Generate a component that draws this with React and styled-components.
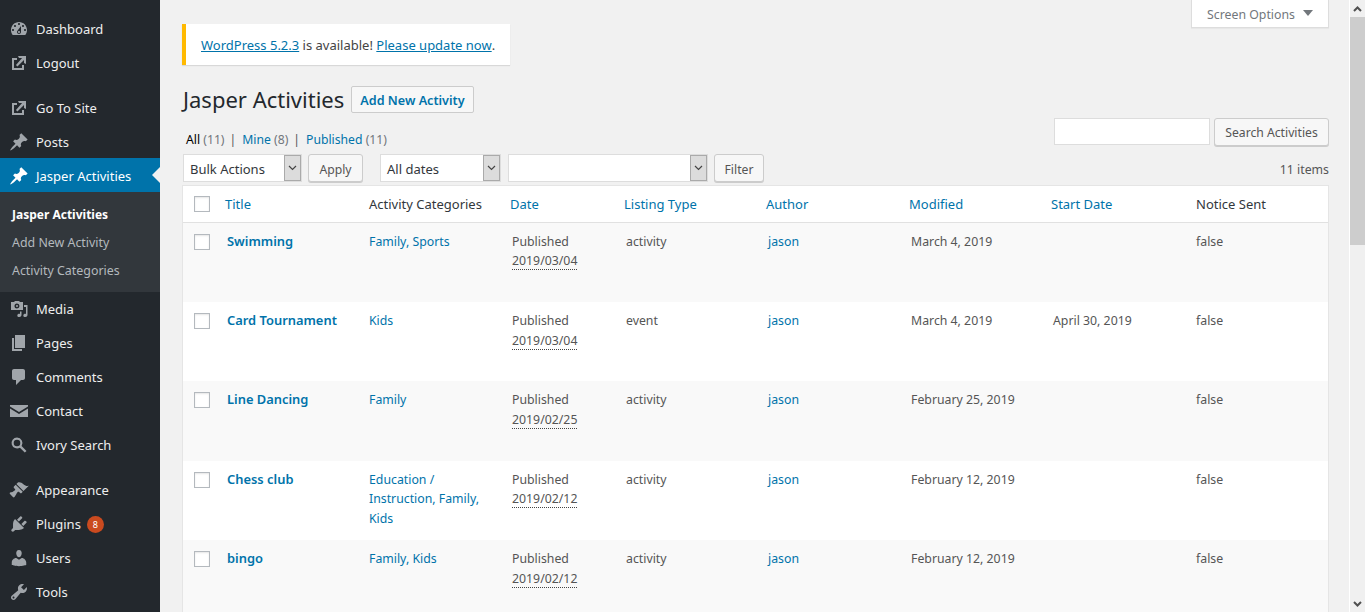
import React from "react";
import styled, { createGlobalStyle } from "styled-components";

const Global = createGlobalStyle`
  html, body { margin: 0; padding: 0; height: 612px; overflow: hidden; background: #f1f1f1; }
  * { box-sizing: border-box; }
  body { font-family: "Noto Sans", "Open Sans", sans-serif; font-size: 13px; color: #444; }
`;

const Page = styled.div`display:flex;height:612px;overflow:hidden;`;
const Side = styled.nav`width:160px;flex:none;background:#23282d;padding-top:12px;height:612px;overflow:hidden;`;
const MenuItem = styled.div`
  position:relative;display:flex;align-items:center;height:34px;padding-left:9px;
  padding-top:${p=>p.$nudge?"2px":"0"};
  color:${p=>p.$active?"#fff":"#eee"};background:${p=>p.$active?"#0073aa":"transparent"};
  font-size:13px;
  margin-top:${p=>p.$sep||0}px;
  svg{width:20px;height:20px;fill:${p=>p.$active?"#fff":"#a0a5aa"};flex:none;margin-right:7px;}
`;
const Arrow = styled.span`position:absolute;right:0;top:9px;border:8px solid transparent;border-right-color:#f1f1f1;border-left:0;`;
const Sub = styled.div`background:#32373c;padding:9px 0 7px;`;
const SubItem = styled.div`height:28px;line-height:28px;padding-left:12px;font-size:${p=>p.$cur?"12px":"12.4px"};color:${p=>p.$cur?"#fff":"#b4b9be"};font-weight:${p=>p.$cur?700:400};`;
const Badge = styled.span`width:17px;height:17px;border-radius:50%;background:#ca4a1f;color:#fff;font-size:9px;display:flex;align-items:center;justify-content:center;margin-left:6px;`;

const Main = styled.main`flex:1;min-width:0;padding:0 20px 0 22px;position:relative;`;
const ScreenTab = styled.div`
  position:absolute;top:0;right:20px;width:138px;height:28px;padding-top:1px;background:#fff;border:1px solid #ddd;border-top:0;
  color:#72777c;font-size:12.3px;display:flex;align-items:center;justify-content:center;gap:8px;box-shadow:0 1px 1px rgba(0,0,0,.04);
`;
const Caret = styled.span`border:5px solid transparent;border-top:6px solid #72777c;border-bottom:0;margin-top:-3px;`;
const Notice = styled.div`
  margin-top:24px;width:328px;height:41px;background:#fff;border-left:4px solid #ffb900;box-shadow:0 1px 1px rgba(0,0,0,.1);
  display:flex;align-items:center;padding-left:15px;font-size:13px;color:#444;white-space:pre;
  a{color:#0073aa;text-decoration:underline;}
`;
const HeadRow = styled.div`display:flex;align-items:center;margin-top:20px;height:29px;`;
const H1 = styled.h1`margin:0;padding:0 0 2px 1px;font-size:22px;font-weight:400;color:#23282d;`;
const AddBtn = styled.a`
  margin-left:7px;height:27px;padding:2px 8px 0;display:flex;align-items:center;border:1px solid #ccc;border-radius:2px;
  background:#f7f7f7;color:#0073aa;font-size:12.6px;font-weight:600;
`;
const TopArea = styled.div`display:flex;justify-content:space-between;align-items:flex-start;height:31px;margin-top:4px;`;
const Views = styled.div`padding:13px 0 0 4px;font-size:12.2px;color:#555;white-space:pre;b{color:#000;font-weight:400}a{color:#0073aa}span{color:#72777c}`;
const Sep = styled.i`font-style:normal;margin:0 6px 0 5px;color:#555;`;
const SearchBox = styled.div`display:flex;gap:4px;`;
const TextInput = styled.div`width:156px;height:27px;background:#fff;border:1px solid #ddd;`;
const Btn = styled.div`
  width:${p=>p.$w}px;height:28px;padding-top:${p=>p.$pt||0}px;display:flex;align-items:center;justify-content:center;background:#f7f7f7;border:1px solid #ccc;border-radius:3px;
  box-shadow:0 1px 0 #ccc;color:#555;font-size:12.2px;margin-left:${p=>p.$ml||0}px;
`;
const Filters = styled.div`display:flex;align-items:center;height:28px;margin-top:5px;padding-left:1px;`;
const Select = styled.div`
  width:${p=>p.$w}px;height:28px;background:#fff;border:1px solid #ddd;display:flex;align-items:center;justify-content:space-between;
  padding-left:6px;margin-left:${p=>p.$ml||0}px;font-size:13px;color:#32373c;
`;
const SelectText = styled.span`padding-top:2px;`;
const Chevron = styled.span`
  width:17px;height:26px;background:#dcdcdc;border:1px solid #aaa;display:flex;align-items:center;justify-content:center;
  svg{width:9px;height:6px;}
`;
const Count = styled.div`margin-left:auto;padding-top:2px;font-size:12.3px;color:#555;`;
const Table = styled.table`
  width:1147px;margin-top:3px;border-collapse:separate;border-spacing:0;table-layout:fixed;background:#fff;border:1px solid #e5e5e5;border-bottom:0;
`;
const Th = styled.th`
  height:37px;padding:0 8px;text-align:left;font-weight:400;font-size:13px;border-bottom:1px solid #e1e1e1;
  color:${p=>p.$sort?"#0073aa":"#32373c"};
  padding-left:${p=>p.$pl??8}px;
`;
const Tr = styled.tr`background:${p=>p.$alt?"#f9f9f9":"#fff"};height:${p=>p.$h}px;`;
const Td = styled.td`padding:${p=>p.$pt??9}px 10px 0;vertical-align:top;font-size:12.3px;line-height:19.5px;color:#555;a{color:#0073aa;}`;
const TitleLink = styled.a`font-size:12.9px;font-weight:600;color:#0073aa;`;
const Abbr = styled.span`border-bottom:1px dotted #444;`;
const Check = styled.span`display:block;width:16px;height:16px;background:#fff;border:1px solid #b4b9be;box-shadow:inset 0 1px 2px rgba(0,0,0,.1);`;
const CheckTd = styled(Td)`padding:11px 0 0 11px;`;
const CheckTh = styled(Th)`padding:0 0 0 11px;`;
const Bar = styled.div`width:17px;flex:none;height:612px;background:#f0f0f0;border-left:1px solid #fff;border-right:1px solid #fff;display:flex;flex-direction:column;align-items:center;`;
const BarBtn = styled.div`height:17px;width:100%;flex:none;background:#f0f0f0;display:flex;align-items:center;justify-content:center;svg{width:9px;height:6px}`;
const Thumb = styled.div`width:100%;height:228px;flex:none;background:#cdcdcd;`;
const Track = styled.div`flex:1;width:100%;`;

const ic = {
  dash:"M3.76 16h12.48c1.1-1.37 1.76-3.11 1.76-5 0-4.42-3.58-8-8-8s-8 3.58-8 8c0 1.89.66 3.63 1.76 5zM10 4c.55 0 1 .45 1 1s-.45 1-1 1-1-.45-1-1 .45-1 1-1zM6 6c.55 0 1 .45 1 1s-.45 1-1 1-1-.45-1-1 .45-1 1-1zm8 0c.55 0 1 .45 1 1s-.45 1-1 1-1-.45-1-1 .45-1 1-1zm-5.37 5.55L12 7v6c0 1.1-.9 2-2 2s-2-.9-2-2c0-.57.24-1.08.63-1.45zM4 10c.55 0 1 .45 1 1s-.45 1-1 1-1-.45-1-1 .45-1 1-1zm12 0c.55 0 1 .45 1 1s-.45 1-1 1-1-.45-1-1 .45-1 1-1zm-5 3c0-.55-.45-1-1-1s-1 .45-1 1 .45 1 1 1 1-.45 1-1z",
  ext:"M9 3h8v8l-2-1V6.92l-6.6 6.59-1.41-1.41L13.07 5H10zm-6 2h5v2H5v8h8v-3h2v5H3z",
  pin:"M10.44 3.02l1.82-1.82 6.36 6.35-1.83 1.82c-1.05-.68-2.48-.57-3.41.36l-.75.75c-.92.93-1.04 2.35-.35 3.41l-1.83 1.82-2.41-2.41-2.8 2.79c-.42.42-3.38 2.71-3.8 2.29s1.86-3.39 2.28-3.81l2.79-2.79L4.1 9.36l1.83-1.82c1.05.69 2.48.57 3.4-.36l.75-.75c.93-.92 1.05-2.35.36-3.41z",
  media:"M2 3h3l1-1h4l1 1h3v8H2zm6 1.5a2.5 2.5 0 1 0 0 5 2.5 2.5 0 0 0 0-5zm0 1.5a1 1 0 1 1 0 2 1 1 0 0 1 0-2zM17 6h1.5v10c0 1.2-1 2-2.2 2s-2-.7-2-1.6.9-1.6 2-1.6c.3 0 .5 0 .7.1V8h-2V6zM11 12.5h1.5V16c0 1.2-1 2-2.2 2s-2-.7-2-1.6.9-1.6 2-1.6c.3 0 .5 0 .7.1z",
  pages:"M6 15V2h10v13H6zm-1 1h8v2H3V5h2v11z",
  comment:"M5 2h9c1.1 0 2 .9 2 2v7c0 1.1-.9 2-2 2h-2l-5 5v-5H5c-1.1 0-2-.9-2-2V4c0-1.1.9-2 2-2z",
  mail:"M1 4h18v1.5L10 11 1 5.5zM1 7.5l9 5.5 9-5.5V16H1z",
  search:"M8 2.5a5.5 5.5 0 0 1 4.6 8.5l4.9 4.9-1.7 1.7-4.9-4.9A5.5 5.5 0 1 1 8 2.5zm0 2.2a3.3 3.3 0 1 0 0 6.6 3.3 3.3 0 0 0 0-6.6z",
  brush:"M14.48 11.06L7.41 3.99l1.5-1.5c.5-.56 2.3-.47 3.51.32 1.21.8 1.43 1.28 2.91 2.1 1.18.64 2.45 1.26 4.45.85zm-.71.71L6.7 4.7 4.93 6.47c-.39.39-.39 1.02 0 1.41l1.06 1.06c.39.39.39 1.03 0 1.42-.6.6-1.48 1.06-2.5 1.6L1 12.5c-.5.5-.5 1 0 1.6l2.9 2.9c.6.5 1.1.5 1.6 0l1.6-2.5c.5-1 1-1.9 1.6-2.5.39-.39 1.03-.39 1.42 0l1.06 1.06c.39.39 1.02.39 1.41 0z",
  plug:"M13.11 4.36L9.87 7.6 8 5.73l3.24-3.24c.35-.34 1.05-.2 1.56.32.52.51.66 1.21.31 1.55zm-8 1.77l.91-1.12 9.01 9.01-1.19.84c-.71.71-2.63 1.16-3.82 1.16H6.14L4.9 17.26c-.59.59-1.54.59-2.12 0-.59-.58-.59-1.53 0-2.12l1.24-1.24v-3.88c0-1.13.4-3.19 1.09-3.89zm7.26 3.97l3.24-3.24c.34-.35 1.04-.21 1.55.31.52.51.66 1.21.31 1.55l-3.24 3.25z",
  user:"M10 9.25c-2.27 0-2.73-3.44-2.73-3.44C7 4.02 7.82 2 9.97 2c2.16 0 2.98 2.02 2.71 3.81 0 0-.41 3.44-2.68 3.44zm0 2.57L12.72 10c2.39 0 4.52 2.33 4.52 4.53v2.49s-3.65 1.13-7.24 1.13c-3.65 0-7.24-1.13-7.24-1.13v-2.49c0-2.25 1.94-4.48 4.47-4.48z",
  tool:"M16.68 9.77c-1.34 1.34-3.3 1.67-4.95.99l-5.41 6.52c-.99.99-2.59.99-3.58 0s-.99-2.59 0-3.57l6.52-5.42c-.68-1.65-.35-3.61.99-4.95 1.28-1.28 3.12-1.62 4.72-1.06l-2.89 2.89 2.82 2.82 2.86-2.87c.53 1.58.18 3.39-1.08 4.65zM3.81 16.21c.4.39 1.04.39 1.43 0 .4-.4.4-1.04 0-1.43-.39-.4-1.03-.4-1.43 0-.39.39-.39 1.03 0 1.43z",
};
const Icon = ({ d }) => <svg viewBox="0 0 20 20"><path d={d} fillRule="evenodd" /></svg>;
const ChevIcon = () => <svg viewBox="0 0 9 6"><path d="M1 1l3.5 3.5L8 1" fill="none" stroke="#444" strokeWidth="1.2" /></svg>;

const rows = [
  ["Swimming", ["Family, Sports"], "2019/03/04", "activity", "March 4, 2019", "", 79, 8.75],
  ["Card Tournament", ["Kids"], "2019/03/04", "event", "March 4, 2019", "April 30, 2019", 79, 9],
  ["Line Dancing", ["Family"], "2019/02/25", "activity", "February 25, 2019", "", 80, 9],
  ["Chess club", ["Education /", "Instruction, Family,", "Kids"], "2019/02/12", "activity", "February 12, 2019", "", 79, 8.75],
  ["bingo", ["Family, Kids"], "2019/02/12", "activity", "February 12, 2019", "", 79, 9],
];

export default function App() {
  return (
    <Page>
      <Global />
      <Side>
        <MenuItem><Icon d={ic.dash} />Dashboard</MenuItem>
        <MenuItem><Icon d={ic.ext} />Logout</MenuItem>
        <MenuItem $sep={10} $nudge><Icon d={ic.ext} />Go To Site</MenuItem>
        <MenuItem $nudge><Icon d={ic.pin} />Posts</MenuItem>
        <MenuItem $active $nudge><Icon d={ic.pin} />Jasper Activities<Arrow /></MenuItem>
        <Sub>
          <SubItem $cur>Jasper Activities</SubItem>
          <SubItem>Add New Activity</SubItem>
          <SubItem>Activity Categories</SubItem>
        </Sub>
        <MenuItem><Icon d={ic.media} />Media</MenuItem>
        <MenuItem><Icon d={ic.pages} />Pages</MenuItem>
        <MenuItem><Icon d={ic.comment} />Comments</MenuItem>
        <MenuItem><Icon d={ic.mail} />Contact</MenuItem>
        <MenuItem><Icon d={ic.search} />Ivory Search</MenuItem>
        <MenuItem $sep={11}><Icon d={ic.brush} />Appearance</MenuItem>
        <MenuItem><Icon d={ic.plug} />Plugins<Badge>8</Badge></MenuItem>
        <MenuItem><Icon d={ic.user} />Users</MenuItem>
        <MenuItem><Icon d={ic.tool} />Tools</MenuItem>
      </Side>
      <Main>
        <ScreenTab>Screen Options<Caret /></ScreenTab>
        <Notice><a>WordPress 5.2.3</a> is available! <a>Please update now</a>.</Notice>
        <HeadRow><H1>Jasper Activities</H1><AddBtn>Add New Activity</AddBtn></HeadRow>
        <TopArea>
          <Views><b>All</b> <span>(11)</span><Sep>|</Sep><a>Mine</a> <span>(8)</span><Sep>|</Sep><a>Published</a> <span>(11)</span></Views>
          <SearchBox><TextInput /><Btn $w={115}>Search Activities</Btn></SearchBox>
        </TopArea>
        <Filters>
          <Select $w={119}><SelectText>Bulk Actions</SelectText><Chevron><ChevIcon /></Chevron></Select>
          <Btn $w={55} $ml={6} $pt={2}>Apply</Btn>
          <Select $w={121} $ml={17}><SelectText>All dates</SelectText><Chevron><ChevIcon /></Chevron></Select>
          <Select $w={200} $ml={7}><span /><Chevron><ChevIcon /></Chevron></Select>
          <Btn $w={50} $ml={6} $pt={2}>Filter</Btn>
          <Count>11 items</Count>
        </Filters>
        <Table>
          <colgroup>
            {[34, 142, 143, 114, 142, 143, 142, 143, 142].map((w, i) => <col key={i} style={{ width: w }} />)}
          </colgroup>
          <thead>
            <tr>
              <CheckTh><Check /></CheckTh>
              <Th $sort>Title</Th>
              <Th $pl={10}>Activity Categories</Th>
              <Th $sort>Date</Th>
              <Th $sort>Listing Type</Th>
              <Th $sort>Author</Th>
              <Th $sort>Modified</Th>
              <Th $sort>Start Date</Th>
              <Th $pl={10}>Notice Sent</Th>
            </tr>
          </thead>
          <tbody>
            {rows.map((r, i) => (
              <Tr key={r[0]} $alt={i % 2 === 0} $h={r[6]}>
                <CheckTd><Check /></CheckTd>
                <Td><TitleLink>{r[0]}</TitleLink></Td>
                <Td $pt={r[7]}>{r[1].map(c => <div key={c}><a>{c}</a></div>)}</Td>
                <Td $pt={r[7]}>Published<br /><Abbr>{r[2]}</Abbr></Td>
                <Td>{r[3]}</Td>
                <Td><a>jason</a></Td>
                <Td>{r[4]}</Td>
                <Td>{r[5]}</Td>
                <Td>false</Td>
              </Tr>
            ))}
          </tbody>
        </Table>
      </Main>
      <Bar>
        <BarBtn><svg viewBox="0 0 9 6"><path d="M1 5l3.5-3.5L8 5" fill="none" stroke="#505050" strokeWidth="2" /></svg></BarBtn>
        <Thumb />
        <Track />
        <BarBtn><svg viewBox="0 0 9 6"><path d="M1 1l3.5 3.5L8 1" fill="none" stroke="#505050" strokeWidth="2" /></svg></BarBtn>
      </Bar>
    </Page>
  );
}
